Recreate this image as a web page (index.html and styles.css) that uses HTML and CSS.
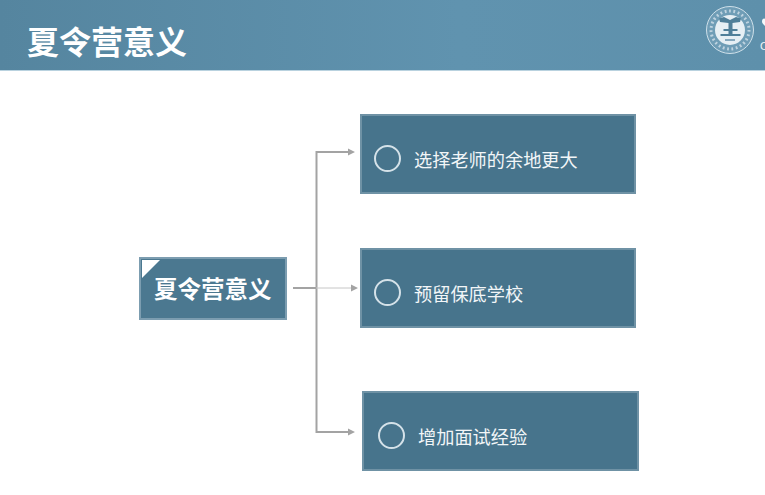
FILE: index.html
```html
<!DOCTYPE html>
<html lang="zh">
<head>
<meta charset="utf-8">
<title>夏令营意义</title>
<link rel="stylesheet" href="styles.css">
</head>
<body>
<header class="banner">
  <h1 class="banner-title">夏令营意义</h1>
  <div class="logo-area">
    <svg class="emblem" width="50" height="50" viewBox="0 0 50 50">
      <circle cx="25" cy="25" r="23.500" fill="#6f9db6" stroke="#cfe0e9" stroke-width="1"/>
      <circle cx="25" cy="25" r="19" fill="none" stroke="#d9e6ed" stroke-width="3" stroke-dasharray="1.800 2.600" opacity="0.75"/>
      <circle cx="25" cy="25" r="15" fill="#e6eff4"/>
      <path d="M14 13.500l5-1.500 6 3 6-3 5 1.500-1 3.500-7.500 1V24h5v2h-5v3h8v2H15.500v-2h8v-3h-5v-2h5v-6L15 17z" fill="#4f7f99"/>
      <rect x="20" y="34" width="10" height="2" fill="#86a9be"/>
    </svg>
    <div class="crest-fragment">
      <svg class="crest-mark" width="6" height="12" viewBox="0 0 6 12"><path d="M3 2c1-1.500 3-1.500 3 1v8C3 9 0 7 0 4.500 0 2 2 1 3 2z" fill="#f4f8fa"/></svg>
      <span class="crest-letter">C</span>
    </div>
  </div>
</header>
<main class="diagram">
  <svg class="connectors" width="765" height="424" viewBox="0 0 765 424">
    <path d="M350 81H316.500V361H350" fill="none" stroke="#a3a3a3" stroke-width="2"/>
    <path d="M293 217H316" fill="none" stroke="#a3a3a3" stroke-width="2"/>
    <path d="M316 217H351" fill="none" stroke="#c6c6c6" stroke-width="1"/>
    <path d="M348 77.500l7 3.500-7 3.500zM351 213.500l7 3.500-7 3.500zM348 357.500l7 3.500-7 3.500z" fill="#a3a3a3"/>
  </svg>
  <div class="center-node">
    <span class="center-corner"></span>
    <span class="center-label">夏令营意义</span>
  </div>
  <div class="item item-a"><span class="ring"></span><span class="item-text">选择老师的余地更大</span></div>
  <div class="item item-b"><span class="ring"></span><span class="item-text">预留保底学校</span></div>
  <div class="item item-c"><span class="ring"></span><span class="item-text">增加面试经验</span></div>
</main>
</body>
</html>
```
FILE: styles.css
```css
* { box-sizing: border-box; }
html, body { margin: 0; padding: 0; }
body {
  width: 765px;
  height: 495px;
  overflow: hidden;
  background: #fff;
  font-family: "Noto Sans CJK SC", "Noto Sans", sans-serif;
}
.banner {
  height: 71px;
  display: flex;
  align-items: center;
  justify-content: space-between;
  padding: 0 0 0 27px;
  background: linear-gradient(90deg, #55859f 0%, #6093af 60%, #5e90ab 100%);
  border-bottom: 1px solid #b9d2df;
}
.banner-title {
  margin: 0;
  font-size: 32px;
  line-height: 40px;
  font-weight: 700;
  color: #fff;
  position: relative;
  top: 5px;
}
.logo-area {
  display: flex;
  align-items: flex-start;
  gap: 5px;
  height: 60px;
}
.emblem {
  display: block;
  filter: blur(0.4px);
}
.crest-fragment {
  width: 5px;
  display: flex;
  flex-direction: column;
  align-items: flex-start;
  padding-top: 12px;
  gap: 11px;
}
.crest-mark {
  margin-left: 2px;
  flex: none;
}
.crest-letter {
  font-size: 11px;
  line-height: 12px;
  color: #eef4f7;
  font-family: "Liberation Sans", sans-serif;
}
.diagram {
  position: relative;
  height: 424px;
}
.connectors {
  position: absolute;
  left: 0;
  top: 0;
}
.center-node {
  position: absolute;
  left: 138.500px;
  top: 186px;
  width: 148.500px;
  height: 63px;
  display: flex;
  align-items: center;
  justify-content: center;
  background: #4b7890;
  border: 2px solid #7c9db0;
}
.center-corner {
  position: absolute;
  left: 1px;
  top: 1px;
  border-style: solid;
  border-width: 18px 18px 0 0;
  border-color: #fff transparent transparent transparent;
}
.center-label {
  font-size: 23.500px;
  line-height: 30px;
  font-weight: 700;
  color: #fff;
  position: relative;
  top: -1px;
}
.item {
  position: absolute;
  width: 276.500px;
  height: 80px;
  display: flex;
  align-items: center;
  gap: 13px;
  padding: 8px 0 0 12.500px;
  background: #47748c;
  border: 2px solid #6f92a5;
}
.item-a { left: 359.500px; top: 43px; }
.item-b { left: 359.500px; top: 177px; }
.item-c { left: 362px; top: 320px; padding-left: 14px; }
.ring {
  width: 27px;
  height: 27px;
  border: 2px solid #d5e2e9;
  border-radius: 50%;
  flex: none;
}
.item-text {
  font-size: 18.200px;
  line-height: 24px;
  color: #f2f6f8;
  position: relative;
  top: 1px;
}
```
